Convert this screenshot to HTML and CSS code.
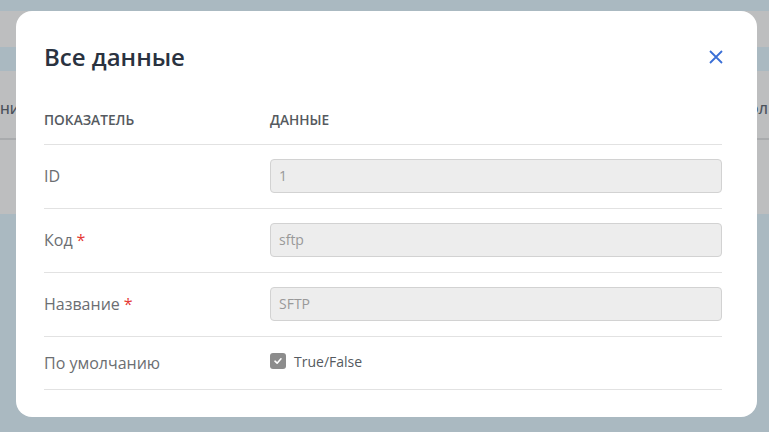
FILE: index.html
```html
<!DOCTYPE html>
<html lang="ru">
<head>
<meta charset="utf-8">
<title>Все данные</title>
<link rel="stylesheet" href="styles.css">
</head>
<body>
<div class="page">
  <div class="band band-blue band-top"></div>
  <div class="band band-gray band-nav"></div>
  <div class="band band-blue band-sub"></div>
  <div class="bg-table">
    <div class="bg-head">
      <span class="bg-cell bg-left">НИЕ</span>
      <span class="bg-cell bg-right">ПОЛ</span>
    </div>
  </div>
</div>

<div class="modal">
  <div class="modal-header">
    <h2 class="modal-title">Все данные</h2>
    <button class="close-btn" type="button" aria-label="Закрыть">
      <svg width="14" height="14" viewBox="0 0 14 14"><path d="M1 1 L13 13 M13 1 L1 13" stroke="#3a6fd6" stroke-width="1.8" fill="none"/></svg>
    </button>
  </div>
  <div class="grid">
    <div class="th">Показатель</div>
    <div class="th">Данные</div>

    <div class="td label">ID</div>
    <div class="td"><div class="input">1</div></div>

    <div class="td label">Код <span class="req">*</span></div>
    <div class="td"><div class="input">sftp</div></div>

    <div class="td label">Название <span class="req">*</span></div>
    <div class="td"><div class="input">SFTP</div></div>

    <div class="td label last">По умолчанию</div>
    <div class="td last">
      <label class="check">
        <span class="box"><svg width="10" height="10" viewBox="0 0 10 10"><path d="M2 5.2 L4.1 7.2 L8 2.8" stroke="#fff" stroke-width="1.6" fill="none" stroke-linecap="round" stroke-linejoin="round"/></svg></span>
        <span class="check-text">True/False</span>
      </label>
    </div>
  </div>
</div>
</body>
</html>
```

FILE: styles.css
```css
* { box-sizing: border-box; }
html, body { margin: 0; padding: 0; }
body {
  width: 769px;
  height: 432px;
  overflow: hidden;
  background: #aab9c1;
  font-family: "Open Sans", "Noto Sans", sans-serif;
  position: relative;
}
.page { display: flex; flex-direction: column; }
.band-blue { background: #aab9c1; }
.band-gray { background: #bdbebf; }
.band-top { height: 11px; }
.band-nav { height: 36px; }
.band-sub { height: 24px; }
.bg-table {
  background: #bdbebf;
  height: 143px;
}
.bg-head {
  height: 69px;
  border-bottom: 2px solid #a9abad;
  display: flex;
  justify-content: space-between;
  align-items: center;
  padding: 8px 1px 0 0;
}
.bg-cell {
  font-size: 13px;
  font-weight: 600;
  color: #4b525b;
  white-space: nowrap;
}

.modal {
  position: absolute;
  left: 16px;
  top: 11px;
  width: 741px;
  height: 406px;
  background: #fff;
  border-radius: 16px;
  padding: 30px 35px 27px 28px;
}
.modal-header {
  display: flex;
  justify-content: space-between;
  align-items: center;
  height: 32px;
}
.modal-title {
  margin: 0;
  font-size: 24px;
  line-height: 32px;
  font-weight: 600;
  color: #2a3240;
}
.close-btn {
  border: 0;
  background: none;
  padding: 0;
  width: 16px;
  height: 16px;
  display: flex;
  align-items: center;
  justify-content: center;
  margin-right: -2px;
}
.grid {
  margin-top: 37px;
  display: grid;
  grid-template-columns: 226px 1fr;
}
.th {
  font-size: 13.7px;
  line-height: 20px;
  font-weight: 600;
  text-transform: uppercase;
  color: #555a60;
  padding-bottom: 14px;
  border-bottom: 1px solid #e2e2e2;
}
.td {
  padding: 14px 0 15px;
  border-bottom: 1px solid #e2e2e2;
  display: flex;
  align-items: center;
  min-height: 64px;
}
.td.last { min-height: 53px; padding: 14px 0 15px; }
.label {
  font-size: 16px;
  color: #6b6e72;
}
.req { color: #e53935; margin-left: 4px; }
.input {
  width: 100%;
  height: 34px;
  background: #ededed;
  border: 1px solid #d2d2d2;
  border-radius: 4px;
  padding: 0 8px;
  font-size: 14px;
  line-height: 32px;
  color: #999;
}
.check {
  display: flex;
  align-items: center;
  gap: 8px;
  margin-top: -3px;
}
.box {
  width: 16px;
  height: 16px;
  border-radius: 3px;
  background: #8c8c8c;
  display: flex;
  align-items: center;
  justify-content: center;
}
.check-text {
  font-size: 14px;
  color: #555a60;
}
```
